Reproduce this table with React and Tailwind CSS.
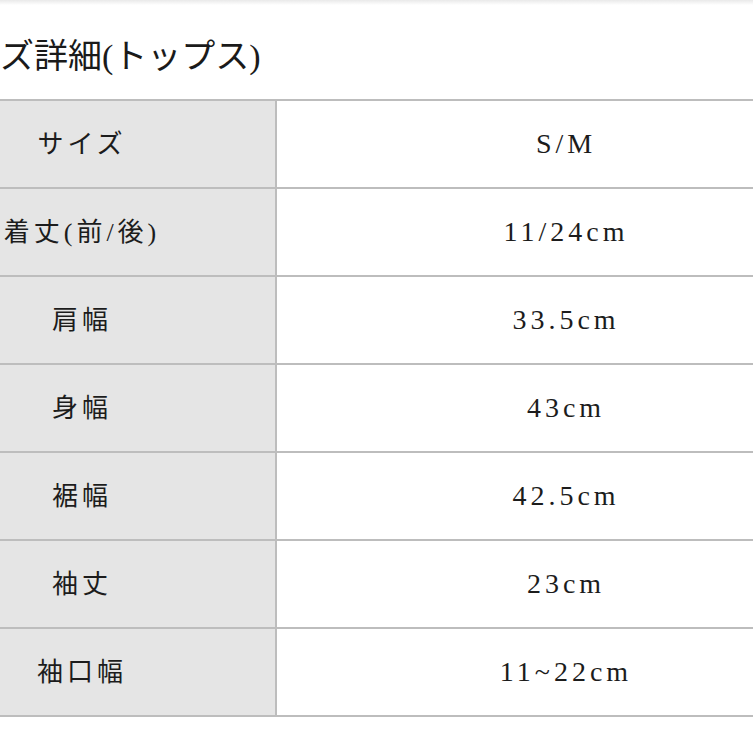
import React from 'react';

const rows = [
  { label: 'サイズ', value: 'S/M' },
  { label: '着丈(前/後)', value: '11/24cm' },
  { label: '肩幅', value: '33.5cm' },
  { label: '身幅', value: '43cm' },
  { label: '裾幅', value: '42.5cm' },
  { label: '袖丈', value: '23cm' },
  { label: '袖口幅', value: '11~22cm' },
];

const SizeRow = ({ label, value }) => (
  <div className="flex h-[88px] border-b-2 border-[#bdbdbd]">
    <div className="w-[388px] shrink-0 bg-[#e5e5e5] border-r-2 border-[#bdbdbd] flex items-center justify-center text-[26px] tracking-[4px] text-[#1c1c1c]">
      {label}
    </div>
    <div className="flex-1 flex items-center justify-center text-[28px] tracking-[4px] text-[#1c1c1c]">
      {value}
    </div>
  </div>
);

export default function App() {
  return (
    <div className="w-[753px] h-[753px] overflow-hidden bg-white font-['Liberation_Serif','Noto_Sans_CJK_JP',serif]">
      <div className="h-[5px] bg-gradient-to-b from-[#e9e9e9] to-white" />
      <div className="h-[94px] flex items-center pt-[10px] text-[34px] text-[#1a1a1a] leading-none">
        ズ詳細(トップス)
      </div>
      <div className="-ml-[111px] w-[966px] border-t-2 border-[#bdbdbd]">
        {rows.map((r) => (
          <SizeRow key={r.label} label={r.label} value={r.value} />
        ))}
      </div>
    </div>
  );
}
